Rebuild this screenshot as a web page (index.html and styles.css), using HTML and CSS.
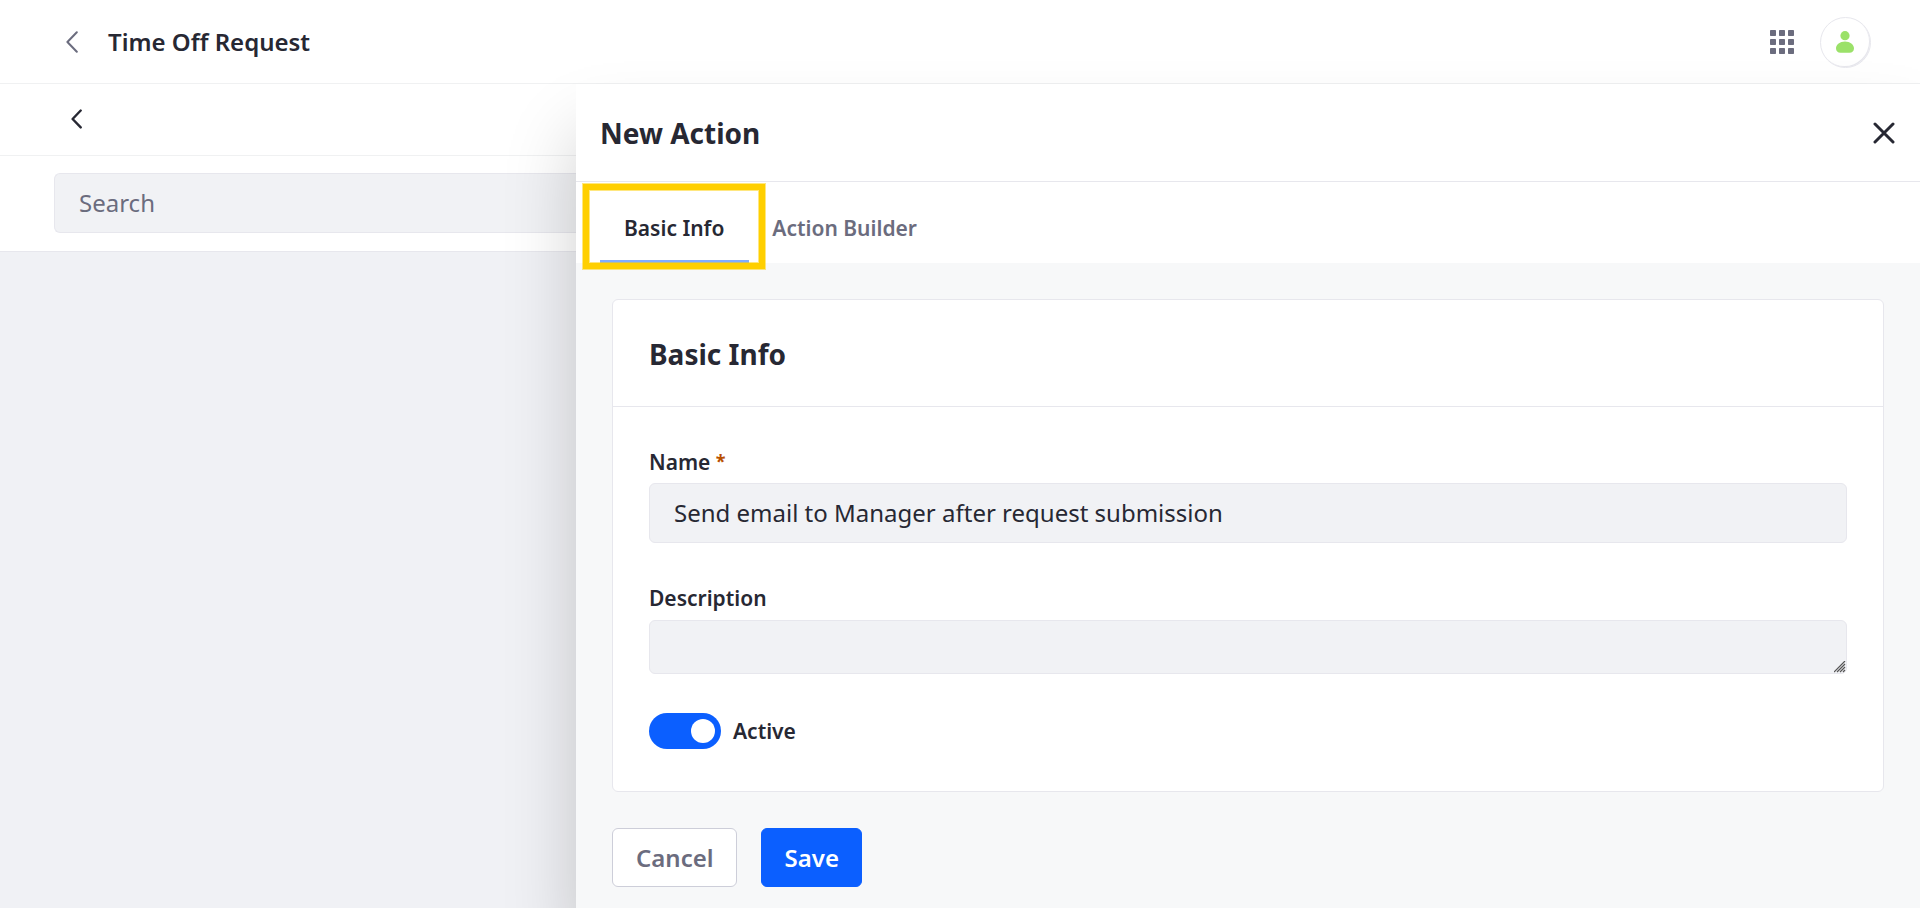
FILE: index.html
```html
<!DOCTYPE html>
<html lang="en">
<head>
<meta charset="utf-8">
<title>Time Off Request</title>
<link rel="stylesheet" href="styles.css">
</head>
<body>
<header class="topbar">
  <a class="back-link" href="#" aria-label="Back">
    <svg width="12" height="22" viewBox="0 0 12 22"><path d="M10.8 1.2 1.4 11l9.4 9.8" /></svg>
  </a>
  <h1 class="topbar-title">Time Off Request</h1>
  <button class="apps" type="button" aria-label="Applications">
    <svg width="24" height="24" viewBox="0 0 24 24"><g id="row"><rect width="6" height="6" rx=".7"/><rect x="9" width="6" height="6" rx=".7"/><rect x="18" width="6" height="6" rx=".7"/></g><use href="#row" y="9"/><use href="#row" y="18"/></svg>
  </button>
  <button class="avatar" type="button" aria-label="User profile">
    <svg width="19" height="22" viewBox="0 0 19 22"><circle cx="9" cy="4.7" r="4.6"/><path d="M9 10.600c5 0 9 3.100 9 6.700 0 3.100-1.800 4.400-4.500 4.400h-9C1.800 21.700 0 20.400 0 17.300c0-3.600 4-6.700 9-6.700z"/></svg>
  </button>
</header>
<div class="workspace">
  <main class="list">
    <nav class="subbar">
      <a class="subbar-back" href="#" aria-label="Go back">
        <svg width="11" height="20" viewBox="0 0 11 20"><path d="M9.700 1.500 1.600 10l8.100 8.400" /></svg>
      </a>
    </nav>
    <div class="search-row">
      <input class="field search" type="search" placeholder="Search" aria-label="Search">
    </div>
  </main>
  <aside class="panel">
    <header class="panel-header">
      <h2 class="heading">New Action</h2>
      <button class="close" type="button" aria-label="Close">
        <svg width="22" height="22" viewBox="0 0 22 22"><path d="m2 2 18 18M20 2 2 20" /></svg>
      </button>
    </header>
    <nav class="tabs">
      <a class="tab tab-active" href="#basic">Basic Info</a>
      <a class="tab" href="#builder">Action Builder</a>
    </nav>
    <form class="panel-body">
      <section class="card" id="basic">
        <h3 class="heading card-header">Basic Info</h3>
        <div class="card-body">
          <div class="group">
            <label class="label" for="name">Name <span class="required">*</span></label>
            <input class="field" id="name" type="text" value="Send email to Manager after request submission">
          </div>
          <div class="group">
            <label class="label" for="description">Description</label>
            <textarea class="field area" id="description"></textarea>
          </div>
          <div class="toggle">
            <input class="switch" id="active" type="checkbox" checked>
            <label class="label" for="active">Active</label>
          </div>
        </div>
      </section>
      <div class="actions">
        <button class="btn" type="button">Cancel</button>
        <button class="btn btn-primary" type="button">Save</button>
      </div>
    </form>
  </aside>
</div>
</body>
</html>
```
FILE: styles.css
```css
* { box-sizing: border-box; }

body {
  margin: 0;
  min-height: 100vh;
  display: flex;
  flex-direction: column;
  overflow: hidden;
  background: #f0f1f5;
  color: #272833;
  font-family: "Noto Sans", sans-serif;
  font-size: 24px;
}

h1, h2, h3 { margin: 0; }
a { text-decoration: none; }
svg { display: block; }

button {
  font: inherit;
  cursor: pointer;
}

.topbar {
  display: flex;
  align-items: center;
  height: 84px;
  padding: 1px 49px 0 66px;
  background: #fff;
  border-bottom: 1px solid #f0f1f2;
}

.back-link svg,
.subbar-back svg,
.close svg {
  fill: none;
  stroke: #272833;
  stroke-width: 2.4;
  stroke-linecap: round;
  stroke-linejoin: round;
}

.back-link svg {
  stroke: #6b6c7e;
  stroke-width: 2;
}

.topbar-title {
  flex: 1;
  margin-left: 30px;
  font-size: 24px;
  font-weight: 600;
  line-height: 36px;
}

.apps {
  margin-right: 26px;
  padding: 0;
  border: 0;
  background: none;
  fill: #6b6c7e;
}

.avatar {
  display: grid;
  place-items: center;
  width: 51px;
  height: 51px;
  padding: 0;
  border: 1px solid #e7e7ed;
  border-radius: 50%;
  background: #fff;
  box-shadow: inset -1px -1px 0 #e7e7ed;
  fill: #9be169;
}

.workspace {
  flex: 1;
  display: grid;
  grid-template-columns: 30% 70%;
}

.list { min-width: 0; }

.subbar {
  display: flex;
  align-items: center;
  height: 72px;
  padding: 0 71px 2px;
  background: #fff;
  border-bottom: 1px solid #f0f1f2;
}

.search-row {
  padding: 17px 0 18px 54px;
  background: #fff;
  border-bottom: 1px solid #e7e7ed;
}

.field {
  display: block;
  width: 100%;
  height: 60px;
  padding: 0 24px 2px;
  border: 1px solid #e7e7ed;
  border-radius: 6px;
  outline: 0;
  background: #f1f2f5;
  color: #272833;
  font: inherit;
}

.field::placeholder {
  color: #6b6c7e;
  opacity: 1;
}

.search {
  border-right: 0;
  border-radius: 6px 0 0 6px;
}

.area {
  height: 54px;
  resize: vertical;
}

.area::-webkit-resizer {
  background: url("data:image/svg+xml,%3Csvg xmlns='http://www.w3.org/2000/svg' width='12' height='12'%3E%3Cpath d='M0 11 11 0M3 11l8-8M6 11l5-5M9 11l2-2' stroke='%23555' stroke-width='1.2' fill='none'/%3E%3C/svg%3E") right bottom no-repeat;
}

.panel {
  z-index: 1;
  display: flex;
  flex-direction: column;
  background: #f7f8f9;
  box-shadow: 0 48px 70px -2px rgba(0, 0, 0, .2);
}

.panel-header {
  display: flex;
  align-items: center;
  justify-content: space-between;
  height: 98px;
  padding: 0 25px 0 24px;
  background: #fff;
  border-bottom: 1px solid #e7e7ed;
}

.heading {
  font-size: 28px;
  font-weight: 700;
  line-height: 36px;
}

.close {
  padding: 0;
  border: 0;
  background: none;
}

.close svg { stroke-width: 3; }

.tabs {
  display: flex;
  padding: 0 24px;
  background: #fff;
}

.tab {
  position: relative;
  padding: 32px 25px 17px 24px;
  border-bottom: 3px solid transparent;
  color: #6b6c7e;
  font-size: 21px;
  font-weight: 600;
  line-height: 29px;
}

.tab + .tab { padding-left: 23px; }

.tab-active {
  border-color: #80acff;
  color: #272833;
}

/* highlight frame drawn over the active tab */
.tab-active::after {
  content: "";
  position: absolute;
  inset: 2px -16px -9px -17px;
  border: 6px solid #ffcf00;
  outline: 1px solid rgba(255, 207, 0, .5);
  box-shadow: inset 0 0 0 1px rgba(255, 207, 0, .5);
}

.panel-body {
  flex: 1;
  padding: 36px 36px 20px;
}

.card {
  background: #fff;
  border: 1px solid #e7e7ed;
  border-radius: 6px;
}

.card-header {
  padding: 36px 36px 34px;
  border-bottom: 1px solid #e7e7ed;
}

.card-body { padding: 36px 36px 42px; }
.group { margin-bottom: 38px; }

.label {
  display: block;
  font-size: 21px;
  font-weight: 600;
  line-height: 32px;
}

.group .label { padding: 3px 0 5px; }
.group + .group { margin: -2px 0 39px; }
.group + .group .label { padding-bottom: 6px; }

.required {
  color: #b95000;
  font-size: 18px;
  font-weight: 700;
  line-height: 1;
  vertical-align: 2px;
}

.toggle {
  display: flex;
  align-items: center;
  gap: 12px;
}

.switch {
  appearance: none;
  width: 72px;
  height: 36px;
  margin: 0;
  padding: 6px;
  border-radius: 18px;
  background: #ccc;
}

.switch::before {
  content: "";
  display: block;
  width: 24px;
  height: 24px;
  border-radius: 50%;
  background: #fff;
}

.switch:checked { background: #0b5fff; }
.switch:checked::before { margin-left: auto; }

.actions {
  display: flex;
  gap: 24px;
  margin-top: 36px;
}

.btn {
  height: 59px;
  padding: 0 22px 0 23px;
  border: 1px solid #cdced9;
  border-radius: 6px;
  background: #fff;
  color: #6b6c7e;
  font-weight: 600;
}

.btn-primary {
  border-color: #0b5fff;
  background: #0b5fff;
  color: #fff;
}
```
